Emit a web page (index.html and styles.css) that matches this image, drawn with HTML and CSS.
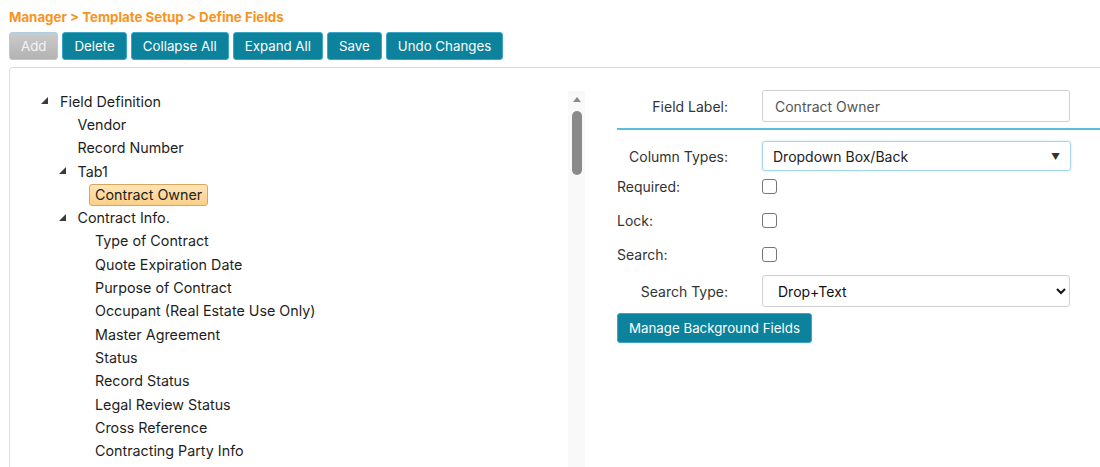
FILE: index.html
```html
<!DOCTYPE html>
<html lang="en">
<head>
    <meta charset="UTF-8">
    <meta name="viewport" content="width=device-width, initial-scale=1.0">
    <title>Define Fields</title>
    <link rel="stylesheet" href="styles.css">
</head>
<body>

    <div class="page">
        <div class="breadcrumb">Manager &gt; Template Setup &gt; Define Fields</div>

        <div class="toolbar">
            <button class="btn btn-disabled">Add</button>
            <button class="btn">Delete</button>
            <button class="btn">Collapse All</button>
            <button class="btn">Expand All</button>
            <button class="btn">Save</button>
            <button class="btn">Undo Changes</button>
        </div>

        <div class="panel">
            <div class="tree-col">
                <ul class="tree">
                    <li>
                        <div class="row"><span class="toggle"></span><span class="label">Field Definition</span></div>
                        <ul>
                            <li><div class="row"><span class="toggle leaf"></span><span class="label">Vendor</span></div></li>
                            <li><div class="row"><span class="toggle leaf"></span><span class="label">Record Number</span></div></li>
                            <li>
                                <div class="row"><span class="toggle"></span><span class="label">Tab1</span></div>
                                <ul>
                                    <li><div class="row"><span class="toggle leaf"></span><span class="label selected">Contract Owner</span></div></li>
                                </ul>
                            </li>
                            <li>
                                <div class="row"><span class="toggle"></span><span class="label">Contract Info.</span></div>
                                <ul>
                                    <li><div class="row"><span class="toggle leaf"></span><span class="label">Type of Contract</span></div></li>
                                    <li><div class="row"><span class="toggle leaf"></span><span class="label">Quote Expiration Date</span></div></li>
                                    <li><div class="row"><span class="toggle leaf"></span><span class="label">Purpose of Contract</span></div></li>
                                    <li><div class="row"><span class="toggle leaf"></span><span class="label">Occupant (Real Estate Use Only)</span></div></li>
                                    <li><div class="row"><span class="toggle leaf"></span><span class="label">Master Agreement</span></div></li>
                                    <li><div class="row"><span class="toggle leaf"></span><span class="label">Status</span></div></li>
                                    <li><div class="row"><span class="toggle leaf"></span><span class="label">Record Status</span></div></li>
                                    <li><div class="row"><span class="toggle leaf"></span><span class="label">Legal Review Status</span></div></li>
                                    <li><div class="row"><span class="toggle leaf"></span><span class="label">Cross Reference</span></div></li>
                                    <li><div class="row"><span class="toggle leaf"></span><span class="label">Contracting Party Info</span></div></li>
                                </ul>
                            </li>
                        </ul>
                    </li>
                </ul>

                <!-- scrollbar of the tree box -->
                <div class="scroll-track">
                    <span class="scroll-up"></span>
                    <span class="scroll-thumb"></span>
                </div>
            </div>

            <div class="form-col">
                <div class="form-row">
                    <label class="lbl lbl-right">Field Label:</label>
                    <input type="text" class="text-input" value="Contract Owner">
                </div>

                <div class="divider"></div>

                <div class="form-row row-select">
                    <label class="lbl lbl-right">Column Types:</label>
                    <div class="fake-select">
                        <span>Dropdown Box/Back</span>
                        <span class="caret">&#9660;</span>
                    </div>
                </div>

                <div class="form-row row-check">
                    <label class="lbl">Required:</label>
                    <input type="checkbox" class="check">
                </div>
                <div class="form-row row-check">
                    <label class="lbl">Lock:</label>
                    <input type="checkbox" class="check">
                </div>
                <div class="form-row row-check">
                    <label class="lbl">Search:</label>
                    <input type="checkbox" class="check">
                </div>

                <div class="form-row row-search">
                    <label class="lbl lbl-right">Search Type:</label>
                    <select class="native-select">
                        <option>Drop+Text</option>
                        <option>Drop</option>
                        <option>Text</option>
                    </select>
                </div>

                <button class="btn btn-manage">Manage Background Fields</button>
            </div>
        </div>
    </div>

</body>
</html>
```

FILE: styles.css
```css
* {
    margin: 0;
    padding: 0;
    box-sizing: border-box;
    font-family: Inter, "Liberation Sans", Arial, sans-serif;
}

body {
    background: white;
    overflow: hidden;
    color: #222;
}

.page {
    width: 1200px;
    padding: 9px 0 0 9px;
}

.breadcrumb {
    color: #f7941d;
    font-size: 13.3px;
    font-weight: bold;
    line-height: 16px;
}

.toolbar {
    display: flex;
    gap: 4px;
    margin-top: 7px;
}

.btn {
    height: 28px;
    padding: 0 11px;
    background: #0d829c;
    color: white;
    border: 1px solid #3aa7c4;
    border-radius: 3px;
    font-size: 13.3px;
    line-height: 26px;
    cursor: pointer;
}

.btn-disabled {
    background: linear-gradient(#cbcbcb, #b3b3b3);
    border-color: #a9cfe0;
    color: #f4f4f4;
}

.panel {
    display: flex;
    margin-top: 7px;
    width: 1130px;
    height: 420px;
    border: 1px solid #dcdcdc;
    border-radius: 4px;
}

/* tree */
.tree-col {
    display: flex;
    width: 575px;
    padding-top: 22px;
}

.tree {
    flex: 1;
    list-style: none;
    padding-left: 26px;
    font-size: 14.3px;
}

.tree ul {
    list-style: none;
    padding-left: 17.5px;
}

.row {
    display: flex;
    align-items: center;
    height: 23.3px;
}

.toggle {
    width: 18px;
    height: 23px;
    flex-shrink: 0;
    position: relative;
}

.toggle::before {
    content: "";
    position: absolute;
    left: 5px;
    top: 7px;
    border-style: solid;
    border-width: 0 0 7px 7px;
    border-color: transparent transparent #3a3a3a transparent;
}

.toggle.leaf::before {
    display: none;
}

.label {
    padding: 0 5px;
    line-height: 20px;
    border: 1px solid transparent;
    border-radius: 3px;
    white-space: nowrap;
    color: #1e1e1e;
}

.label.selected {
    background: linear-gradient(#fee4b6, #fbd089);
    border-color: #d8a75c;
}

.scroll-track {
    width: 17px;
    margin-top: 1px;
    background: #f9f9f9;
    display: flex;
    flex-direction: column;
    align-items: center;
}

.scroll-up {
    margin-top: 6px;
    width: 0;
    height: 0;
    border-left: 4px solid transparent;
    border-right: 4px solid transparent;
    border-bottom: 5px solid #8a8a8a;
}

.scroll-thumb {
    margin-top: 9px;
    width: 10px;
    height: 64px;
    background: #8a8a8a;
    border-radius: 5px;
}

/* form */
.form-col {
    flex: 1;
    padding-left: 32px;
    padding-top: 22px;
    font-size: 14px;
    color: #333;
}

.form-row {
    display: flex;
    align-items: center;
}

.lbl {
    width: 145px;
    flex-shrink: 0;
}

.lbl-right {
    text-align: right;
    padding-right: 34px;
}

.text-input {
    width: 308px;
    height: 32px;
    border: 1px solid #cfcfcf;
    border-radius: 3px;
    padding: 0 12px;
    font-size: 14px;
    color: #555;
}

.divider {
    height: 2px;
    background: #5bbfdc;
    margin-top: 6px;
}

.row-select {
    margin-top: 11px;
    margin-bottom: -2px;
}

.fake-select {
    width: 309px;
    height: 30px;
    border: 1px solid #a7d3e6;
    border-radius: 3px;
    box-shadow: 0 0 2px rgba(91, 191, 220, 0.5);
    display: flex;
    align-items: center;
    justify-content: space-between;
    padding: 0 10px 0 10px;
    color: #222;
}

.caret {
    font-size: 9px;
    color: #333;
}

.row-check {
    height: 34px;
}

.check {
    appearance: none;
    width: 15px;
    height: 15px;
    margin: 0;
    border: 1px solid #767676;
    border-radius: 3px;
    background: white;
}

.row-search {
    margin-top: 4px;
}

.native-select {
    width: 308px;
    height: 32px;
    border: 1px solid #cfcfcf;
    border-radius: 3px;
    background: white;
    padding: 0 11px;
    font-size: 14px;
    color: #111;
}

.btn-manage {
    margin-top: 6px;
    height: 30px;
    padding: 0 11px;
    font-size: 13.3px;
}
```
